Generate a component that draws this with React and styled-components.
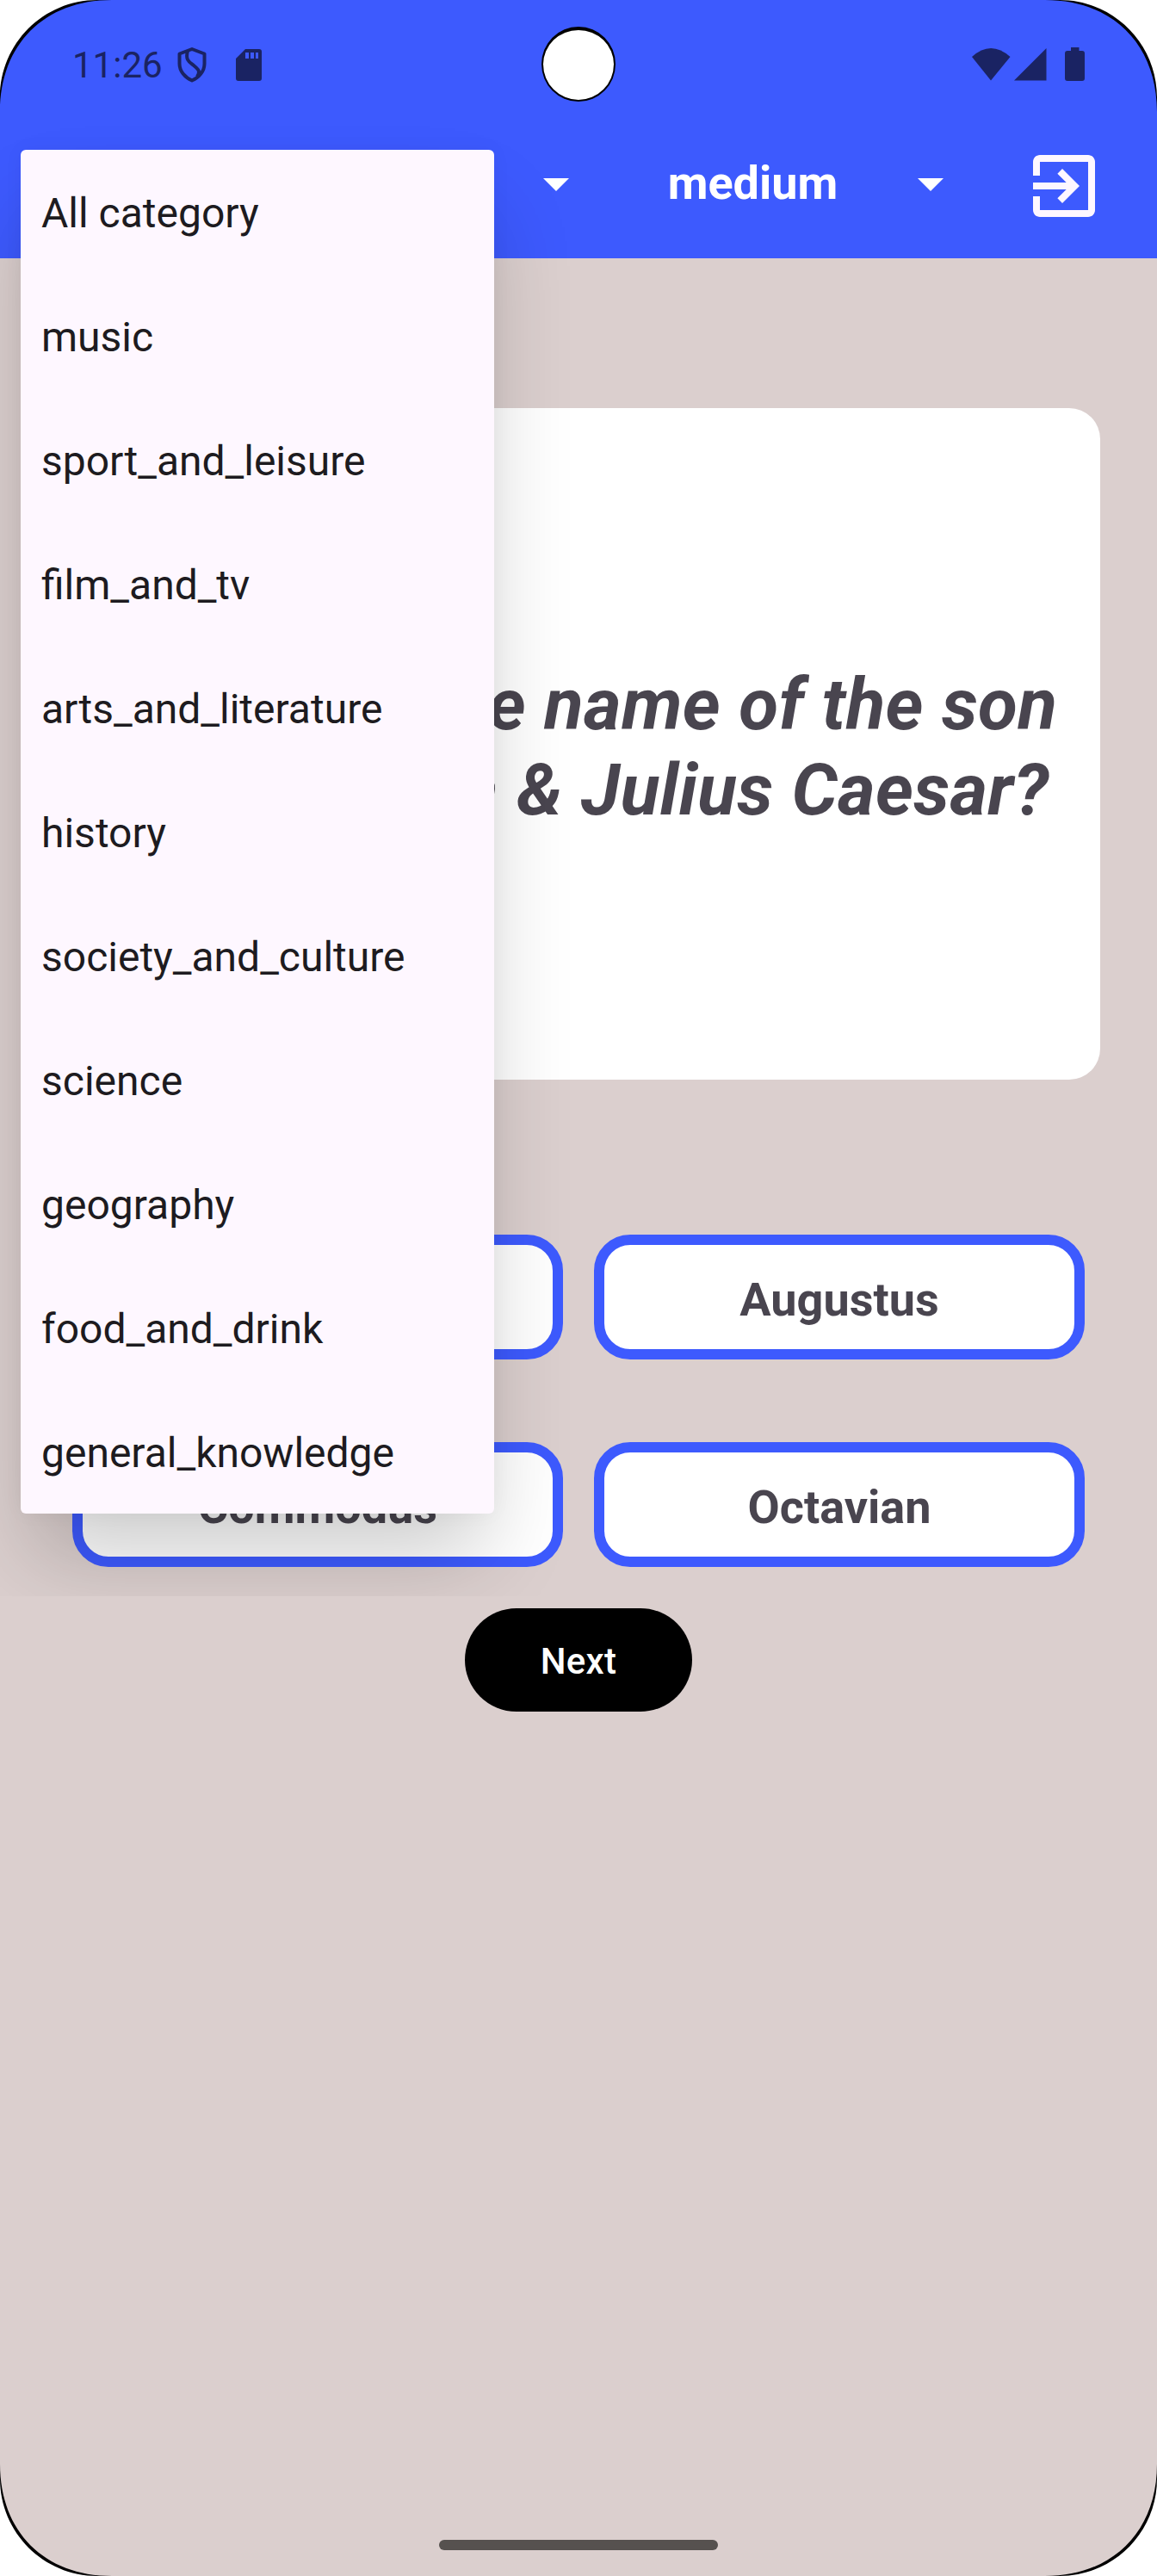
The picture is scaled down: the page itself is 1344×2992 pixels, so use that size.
import React from 'react';
import styled, { createGlobalStyle } from 'styled-components';

const Global = createGlobalStyle`
  html, body { margin: 0; background: #fff; }
  * { box-sizing: border-box; }
`;

const Phone = styled.div`
  position: relative;
  width: 1344px;
  height: 2992px;
  overflow: hidden;
  display: flex;
  flex-direction: column;
  background: #dbcfce;
  font-family: Roboto, 'Liberation Sans', sans-serif;
  color: #49454f;
`;

const Header = styled.header`
  height: 300px;
  flex: none;
  display: flex;
  flex-direction: column;
  background: #3d5afe;
`;

const StatusBar = styled.div`
  height: 150px;
  padding: 0 82px 0 84px;
  display: flex;
  align-items: center;
  color: #1a2363;
`;

const Clock = styled.span`
  padding-top: 2px;
  font-size: 42px;
  line-height: 50px;
  width: 118px;
`;

const LeftIcons = styled.div`
  flex: 1;
  display: flex;
  align-items: center;
  gap: 30px;
`;

const StatusIcons = styled.svg`
  display: block;
  width: 134px;
  height: 40px;
`;

const Glyph = styled.svg`
  display: block;
  flex: none;
  width: ${(p) => p.$w}px;
  height: ${(p) => p.$h}px;
`;

const Toolbar = styled.div`
  height: 132px;
  padding: 0 60px 0 610px;
  display: flex;
  align-items: center;
`;

const Spinner = styled.div`
  flex: 1;
  display: flex;
  align-items: center;
  padding-bottom: 6px;
`;

const Level = styled.span`
  flex: 1;
  text-align: center;
  padding-left: 22px;
  font-size: 54px;
  font-weight: 700;
  line-height: 64px;
  color: #fff;
`;

const ExitButton = styled.button`
  margin: 0 0 0 71px;
  padding: 0;
  border: 0;
  background: none;
`;

const Content = styled.main`
  flex: 1;
  display: flex;
  flex-direction: column;
  align-items: center;
  padding-top: 174px;
`;

const QuestionCard = styled.section`
  width: 1212px;
  height: 780px;
  padding-top: 8px;
  display: flex;
  align-items: center;
  justify-content: center;
  border-radius: 36px;
  background: #fff;
`;

const Question = styled.p`
  margin: 0;
  width: 1150px;
  text-align: center;
  font-size: 84px;
  font-style: italic;
  font-weight: 700;
  line-height: 99px;
  letter-spacing: 0.3px;
`;

const Answers = styled.div`
  margin-top: 180px;
  display: grid;
  grid-template-columns: 570px 570px;
  grid-auto-rows: 145px;
  gap: 96px 36px;
`;

const Answer = styled.button`
  font: 700 54px/64px Roboto, 'Liberation Sans', sans-serif;
  color: #49454f;
  background: #fff;
  border: 12px solid #3d5afe;
  border-radius: 42px;
  padding: 6px 0 0;
`;

const NextButton = styled.button`
  margin-top: 48px;
  width: 264px;
  height: 120px;
  padding: 3px 0 0;
  border: 0;
  border-radius: 60px;
  background: #000;
  color: #fff;
  font: 500 42px/50px Roboto, 'Liberation Sans', sans-serif;
  letter-spacing: 0.3px;
`;

const GestureBar = styled.div`
  width: 324px;
  height: 12px;
  margin: auto auto 30px;
  border-radius: 6px;
  background: #56514f;
`;

const MenuLayer = styled.div`
  position: absolute;
  left: 0;
  top: 78px;
  width: 670px;
  height: 1776px;
  padding: 96px 96px 96px 24px;
  overflow: hidden;
`;

const Menu = styled.ul`
  margin: 0;
  padding: 0;
  list-style: none;
  border-radius: 6px;
  background: #fef7ff;
  box-shadow: 0 60px 96px -12px rgba(0, 0, 0, 0.2), 0 0 24px rgba(0, 0, 0, 0.04);
`;

const MenuItem = styled.li`
  height: 144px;
  padding: 4px 0 0 24px;
  display: flex;
  align-items: center;
  font-size: 48px;
  line-height: 56px;
  color: #1d1b20;
`;

const Camera = styled.div`
  position: absolute;
  left: 629px;
  top: 31px;
  width: 86px;
  height: 87px;
  border-radius: 50%;
  border: solid #000;
  border-width: 4px 2px 2px;
  background: #fff;
`;

const Bezel = styled.svg`
  position: absolute;
  inset: 0;
  width: 1344px;
  height: 2992px;
  pointer-events: none;
`;

const categories = [
  'All category', 'music', 'sport_and_leisure', 'film_and_tv', 'arts_and_literature', 'history',
  'society_and_culture', 'science', 'geography', 'food_and_drink', 'general_knowledge',
];

const Caret = () => (
  <Glyph $w={72} $h={72} viewBox="0 0 24 24" fill="#fff"><path d="M7 10l5 5 5-5z" /></Glyph>
);

const Corner = ({ transform }) => (
  <g transform={transform}>
    <path d="M0 0H130C51.600 0 0 51.600 0 130Z" fill="#000" />
    <path d="M0 0H113C50.600 0 0 50.600 0 113Z" fill="#fff" />
  </g>
);

export default function App() {
  return (
    <>
      <Global />
      <Phone>
        <Header>
          <StatusBar>
            <Clock>11:26</Clock>
            <LeftIcons>
              <Glyph $w={42} $h={42} viewBox="0 0 42 42" fill="none" stroke="#1a2363" strokeWidth="4" strokeLinejoin="round">
                <path d="M21 3L35.500 8.500V20C35.500 29 29 36 21 39.500C13 36 6.500 29 6.500 20V8.500Z" />
                <path d="M16 5C13 16 18 18 23 22C29 27 31 29 27 35" />
              </Glyph>
              <Glyph $w={30} $h={40} viewBox="0 0 30 40" fill="#1a2363">
                <path fillRule="evenodd" d="M11 2H27Q30 2 30 5V36Q30 39 27 39H3Q0 39 0 36V13ZM11 6V13H15V6ZM17 6V13H21V6ZM23 6V13H26V6Z" />
              </Glyph>
            </LeftIcons>
            <StatusIcons viewBox="0 0 134 40" fill="#1a2363">
              <path d="M1 11Q23 -9 45.500 11L23 38.500Z" />
              <path d="M50 38.500L87.500 1V38.500Z" />
              <path d="M116 0H125.500V4H129Q132 4 132 7V36Q132 39 129 39H112Q109 39 109 36V7Q109 4 112 4H116Z" />
            </StatusIcons>
          </StatusBar>
          <Toolbar>
            <Spinner>
              <Caret />
              <Level>medium</Level>
              <Caret />
            </Spinner>
            <ExitButton aria-label="Exit">
              <Glyph $w={96} $h={96} viewBox="0 0 24 24" fill="#fef7ff">
                <path d="M10.090 15.590L11.500 17l5-5-5-5-1.410 1.410L12.670 11H3v2h9.670l-2.580 2.590zM19 3H5c-1.110 0-2 .9-2 2v4h2V5h14v14H5v-4H3v4c0 1.100.89 2 2 2h14c1.100 0 2-.9 2-2V5c0-1.100-.9-2-2-2z" />
              </Glyph>
            </ExitButton>
          </Toolbar>
        </Header>
        <Content>
          <QuestionCard>
            <Question>What was the name of the son of Cleopatra &amp; Julius Caesar?</Question>
          </QuestionCard>
          <Answers>
            <Answer />
            <Answer>Augustus</Answer>
            <Answer>Commodus</Answer>
            <Answer>Octavian</Answer>
          </Answers>
          <NextButton>Next</NextButton>
          <GestureBar />
        </Content>
        <MenuLayer>
          <Menu>
            {categories.map((c) => <MenuItem key={c}>{c}</MenuItem>)}
          </Menu>
        </MenuLayer>
        <Camera />
        <Bezel viewBox="0 0 1344 2992">
          <Corner />
          <Corner transform="translate(1344 0) scale(-1 1)" />
          <Corner transform="translate(0 2992) scale(1 -1)" />
          <Corner transform="translate(1344 2992) scale(-1 -1)" />
        </Bezel>
      </Phone>
    </>
  );
}
